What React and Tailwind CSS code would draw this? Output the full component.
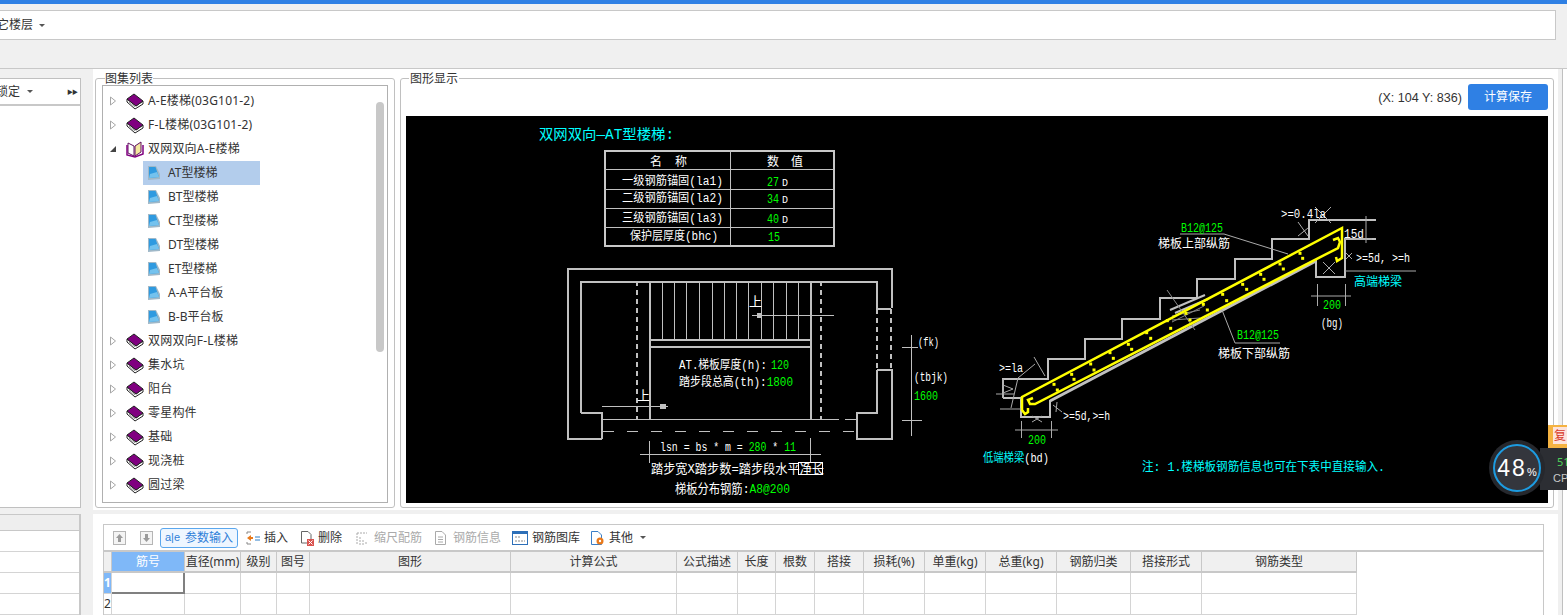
import React from "react";

// Arbol del panel central
const arbol = [
  { t: "A-E楼梯(03G101-2)", tipo: "libro" },
  { t: "F-L楼梯(03G101-2)", tipo: "libro" },
  { t: "双网双向A-E楼梯", tipo: "abierto" },
  { t: "AT型楼梯", tipo: "hoja", sel: true },
  { t: "BT型楼梯", tipo: "hoja" },
  { t: "CT型楼梯", tipo: "hoja" },
  { t: "DT型楼梯", tipo: "hoja" },
  { t: "ET型楼梯", tipo: "hoja" },
  { t: "A-A平台板", tipo: "hoja" },
  { t: "B-B平台板", tipo: "hoja" },
  { t: "双网双向F-L楼梯", tipo: "libro" },
  { t: "集水坑", tipo: "libro" },
  { t: "阳台", tipo: "libro" },
  { t: "零星构件", tipo: "libro" },
  { t: "基础", tipo: "libro" },
  { t: "现浇桩", tipo: "libro" },
  { t: "圆过梁", tipo: "libro" },
];

const columnas = [
  "",
  "筋号",
  "直径(mm)",
  "级别",
  "图号",
  "图形",
  "计算公式",
  "公式描述",
  "长度",
  "根数",
  "搭接",
  "损耗(%)",
  "单重(kg)",
  "总重(kg)",
  "钢筋归类",
  "搭接形式",
  "钢筋类型",
];

const Flecha = ({ abierto }) => (
  <svg width="8" height="10" viewBox="0 0 8 10" className="shrink-0">
    {abierto ? (
      <polygon points="7,2 7,8 1,8" fill="#444" />
    ) : (
      <polygon points="1.5,1 6.5,5 1.5,9" fill="#fff" stroke="#a6a6a6" />
    )}
  </svg>
);

const Libro = () => (
  <svg width="18" height="17" viewBox="0 0 18 17" className="shrink-0">
    <polygon points="1,6 1,9 9,16 17,11 17,8 10,13" fill="#fff" stroke="#222" />
    <polygon points="1,6 8,1 17,8 10,13" fill="#800080" stroke="#222" />
    <path d="M3 9 L9 14" stroke="#999" />
  </svg>
);

const LibroAbierto = () => (
  <svg width="18" height="17" viewBox="0 0 18 17" className="shrink-0">
    <path d="M2 2 L8 5 L8 15 L2 12 Z" fill="#fff" stroke="#601060" />
    <path d="M9 5 L15 1 L15 11 L9 15 Z" fill="#f4e9a0" stroke="#601060" />
    <path d="M1 4 L1 14 L9 16 L17 13 L17 4" fill="none" stroke="#800080" strokeWidth="1.5" />
  </svg>
);

const Hoja = () => (
  <svg width="14" height="16" viewBox="0 0 14 16" className="shrink-0">
    <polygon points="1,15 13,14 13,9 9,1 1,1" fill="#9fb8c8" />
    <polygon points="2,13 12,12 8.5,2 2,2" fill="#2f9ae0" />
    <polygon points="2,13 12,12 10,7 3,9" fill="#74c2ee" />
  </svg>
);

const NodoArbol = ({ nodo }) => (
  <div className="h-6 flex items-center text-xs text-[#333] whitespace-nowrap">
    {nodo.tipo === "hoja" ? (
      <div className={`ml-10 w-[117px] h-6 flex items-center pl-1 gap-[7px] ${nodo.sel ? "bg-[#b3cdec]" : ""}`}>
        <Hoja />
        <span>{nodo.t}</span>
      </div>
    ) : (
      <div className="ml-[6px] flex items-center">
        <Flecha abierto={nodo.tipo === "abierto"} />
        <div className="ml-[9px] mr-[4px]">{nodo.tipo === "abierto" ? <LibroAbierto /> : <Libro />}</div>
        <span className="tracking-[0.2px]">{nodo.t}</span>
      </div>
    )}
  </div>
);

const Leyenda = ({ children, className }) => (
  <span className={`absolute top-[-8px] bg-white text-xs leading-[15px] text-[#333] ${className}`}>{children}</span>
);

// Texto del dibujo CAD, w ajusta el ancho
const T = ({ x, y, c = "#fff", s = 12, w, children }) => (
  <text
    x={x}
    y={y}
    fill={c}
    fontSize={s}
    textLength={w}
    lengthAdjust="spacingAndGlyphs"
    fontFamily="'Liberation Mono','Noto Sans CJK SC',monospace"
  >
    {children}
  </text>
);

const G = ({ children }) => <tspan fill="#00ff00">{children}</tspan>;

const L = ({ d, w = 1, c = "#c0c0c0", da }) => (
  <path d={d} fill="none" stroke={c} strokeWidth={w} strokeDasharray={da} />
);

const puntos = [
  [540, 190], [548, 205], [480, 222], [490, 237], [422, 253], [432, 268], [368, 283], [380, 298],
  [308, 313], [320, 332], [250, 343], [262, 360], [198, 370], [210, 390], [142, 392], [152, 415],
  [80, 428], [92, 445], [25, 463], [35, 478],
].map(([x, y]) => [1120 + x / 3, 190 + y / 3]);

const puntosBajos = [
  [420, 98], [430, 115], [362, 132], [372, 150], [305, 163], [312, 178], [252, 193], [262, 210],
].map(([x, y]) => [970 + x / 3, 320 + y / 3]);

const peldanos = [662, 674, 686, 699, 712, 724, 736, 748, 761, 773, 786, 798];

const filasTabla = [
  ["一级钢筋锚固(la1)", 622, "27", 767, 186, "D"],
  ["二级钢筋锚固(la2)", 622, "34", 767, 203, "D"],
  ["三级钢筋锚固(la3)", 622, "40", 767, 223, "D"],
  ["保护层厚度(bhc)", 630, "15", 768, 241, ""],
];

const DibujoCad = () => (
  <svg viewBox="406 116 1142 387" className="block w-[1142px] h-[387px] bg-black">
    <T x={539} y={139} c="#00ffff" s={14} w={135}>双网双向—AT型楼梯:</T>

    {/* tabla */}
    <g shapeRendering="crispEdges">
      <rect x="604.5" y="150.5" width="229" height="95" fill="none" stroke="#c8c8c8" strokeWidth="2" />
      <L d="M730.5 150V246 M604 169.5H834 M604 189.5H834 M604 208.5H834 M604 227.5H834" />
    </g>
    <T x={650} y={166}>名</T>
    <T x={675} y={166}>称</T>
    <T x={767} y={166}>数</T>
    <T x={791} y={166}>值</T>
    {filasTabla.map(([nombre, x, val, vx, y, u]) => (
      <g key={nombre}>
        <T x={x} y={y - 1} w={x === 622 ? 101 : 88}>{nombre}</T>
        <T x={vx} y={y} c="#00ff00" w={12}>{val}</T>
        {u && <T x={782} y={y} s={11} w={6}>{u}</T>}
      </g>
    ))}

    {/* planta */}
    <g shapeRendering="crispEdges">
      <L w={2} d="M602 439H567.5V268.5H891.5V308 M581 413V281.5H876.5V309H891 M581 413H602V439 M877 370H891.5V439H857V413H877V370" />
      <L w={2} d="M636.5 281V419 M820.5 281V419 M877 309V370 M891 309V370" da="5 4" />
      <L w={2} d="M649.5 281V419 M810.5 281V419 M649 339.5H810 M649 346.5H810" />
      {peldanos.map((x) => (
        <L key={x} d={`M${x}.5 281V339`} />
      ))}
      <L d="M752 315.5H834 M602 406.5H668 M603 419.5H839 M845 419.5H857" />
      <L d="M603 431.5H857" da="11 13" />
      <L c="#c0c0c0" d="M911.5 335V436 M902 347.5H918 M902 420.5H922 M640 454.5H821 M649.5 441V463 M810.5 438V463" />
      <rect x="757" y="313" width="5" height="5" fill="#c0c0c0" />
      <rect x="660" y="404" width="6" height="5" fill="#c0c0c0" />
      <rect x="798.5" y="462.5" width="24" height="12" fill="none" stroke="#fff" />
    </g>
    <T x={749} y={306} s={13}>上</T>
    <T x={637} y={400} s={13}>上</T>
    <T x={679} y={369} w={88}>AT.梯板厚度(h):</T>
    <T x={771} y={369} c="#00ff00" w={18}>120</T>
    <T x={679} y={386} w={114}>踏步段总高(th):<G>1800</G></T>
    <T x={918} y={346} w={21}>(fk)</T>
    <T x={914} y={381} w={34}>(tbjk)</T>
    <T x={914} y={400} c="#00ff00" w={24}>1600</T>
    <T x={660} y={451} w={136}>lsn = bs * m = <G>280</G> * <G>11</G></T>
    <T x={651} y={473} s={13} w={173}>踏步宽X踏步数=踏步段水平净长</T>
    <T x={675} y={493} s={13} w={115}>梯板分布钢筋:<G>A8@200</G></T>

    {/* escalera */}
    <L w={2} d="M1003 398V379H1048V359H1085V339H1122V319H1160V298H1197V279H1235V259H1272V239H1309V220H1376" />
    <L w={2} d="M1376 239H1345V277H1316V260" />
    <L w={2} d="M1003 398H1021V417H1050V400" />
    <L w={3} d="M1050 401L1316 261" />
    <L w={2} d="M1170 310L1205 295 M1175 313L1208 299" />
    <L c="#888" d="M1167 290L1195 330 M1172 316L1200 310 M1172 320L1200 318 M1172 322L1204 306" />
    <L c="#ffff00" w={2.5} d="M1028 408V412L1025 414L1022 410V397L1342 228V258L1337 261L1336 257" />
    <L c="#ffff00" w={2.5} d="M1033 398L1028 400L1030 404H1035L1338 248L1340 242L1338 238L1333 240" />
    {[...puntos, ...puntosBajos].map(([x, y]) => (
      <rect key={`${x}-${y}`} x={x - 1.5} y={y - 1.5} width="3" height="3" fill="#ffff00" />
    ))}

    {/* cotas */}
    <L c="#aaa" d="M1180 234H1224L1288 254 M1235 343H1280 M1235 343L1222 310" />
    <L c="#aaa" d="M1315 207L1331 223 M1331 207L1315 223 M1298 222L1308 236 M1298 236L1308 228" />
    <L c="#aaa" d="M1345 271H1416 M1366 216V243 M1345 239H1372 M1311 296H1351 M1317.5 284V306 M1345.5 284V306 M1346 253L1352 259 M1346 259L1352 253 M1323 262L1335 274 M1323 274L1335 262" />
    <L c="#aaa" d="M1015 430H1058 M1021.5 421V438 M1051.5 421V438 M1003 379V398 M996 394H1014 M1000 409H1021 M1003 385L1013 389L1003 393 M1035 364L1018 378L1011 408 M1034 357L1045 376 M1053 405L1062 412 M1057 402L1056 412 M1032 416L1042 422 M1032 422L1042 416" />
    <T x={1181} y={232} c="#00ff00" w={42}>B12@125</T>
    <T x={1158} y={248} s={12.5} w={72}>梯板上部纵筋</T>
    <T x={1281} y={218} w={45}>&gt;=0.4la</T>
    <T x={1344} y={238} w={20}>15d</T>
    <T x={1356} y={262} w={54}>&gt;=5d, &gt;=h</T>
    <T x={1354} y={286} c="#00ffff" s={12.5} w={48}>高端梯梁</T>
    <T x={1323} y={309} c="#00ff00" w={18}>200</T>
    <T x={1321} y={327} w={22}>(bg)</T>
    <T x={1237} y={339} c="#00ff00" w={42}>B12@125</T>
    <T x={1218} y={358} s={12.5} w={72}>梯板下部纵筋</T>
    <T x={999} y={372} w={24}>&gt;=la</T>
    <T x={1063} y={420} w={47}>&gt;=5d,&gt;=h</T>
    <T x={1028} y={444} c="#00ff00" w={18}>200</T>
    <T x={983} y={462} c="#00ffff" w={66}>低端梯梁<tspan fill="#fff">(bd)</tspan></T>
    <T x={1142} y={471} c="#00ffff" w={243}>注: 1.楼梯板钢筋信息也可在下表中直接输入.</T>
  </svg>
);

// Iconos de la barra
const Ico = ({ w = 14, children }) => (
  <svg width={w} height="16" viewBox={`0 0 ${w} 16`} className="shrink-0">
    {children}
  </svg>
);

const Boton = ({ ancho, icono, children, gris }) => (
  <div className={`${ancho} h-5 flex items-center gap-[4px] whitespace-nowrap ${gris ? "text-[#aaa]" : "text-[#333]"}`}>
    {icono}
    <span>{children}</span>
  </div>
);

const BarraHerramientas = () => (
  <div className="h-[25px] flex items-center pl-[9px] text-xs">
    <div className="w-[27px] flex">
      <svg width="13" height="16" viewBox="0 0 13 16">
        <rect x=".5" y="1.5" width="12" height="13" fill="#f4f4f4" stroke="#b5b5b5" />
        <path d="M6.5 4L10 8H8V12H5V8H3Z" fill="#9a9a9a" />
      </svg>
    </div>
    <div className="w-[20px] flex">
      <svg width="13" height="16" viewBox="0 0 13 16">
        <rect x=".5" y="1.5" width="12" height="13" fill="#f4f4f4" stroke="#b5b5b5" />
        <path d="M6.5 12L10 8H8V4H5V8H3Z" fill="#9a9a9a" />
      </svg>
    </div>
    <div className="w-[78px] h-5 flex items-center gap-[5px] pl-1 rounded-[3px] border border-[#5aa7ee] bg-[#eef6ff] text-[#2f7fd8] whitespace-nowrap">
      <span className="text-[11px] leading-none font-['Liberation_Sans'] w-[15px]">a|e</span>
      <span>参数输入</span>
    </div>
    <div className="w-2" />
    <Boton
      ancho="w-[54px]"
      icono={
        <Ico>
          <path d="M1 2H5M1 14H5M1 2V4M1 12V14" stroke="#888" fill="none" />
          <path d="M1 8L5 5V7H7V9H5V11Z" fill="#e8791b" />
          <path d="M9 7H14M9 10H14" stroke="#2d7fc8" />
        </Ico>
      }
    >
      插入
    </Boton>
    <Boton
      ancho="w-[56px]"
      icono={
        <Ico>
          <path d="M1.5 1.5H8L11 4.500V13H1.5Z" fill="#fff" stroke="#666" />
          <rect x="7" y="9" width="7" height="7" fill="#d9534f" />
          <path d="M8.500 10.500L12.500 14.500M12.500 10.500L8.500 14.500" stroke="#fff" />
        </Ico>
      }
    >
      删除
    </Boton>
    <Boton
      ancho="w-[78px]"
      gris
      icono={
        <Ico>
          <path d="M1 3H11M1 3V15M4 7V15M7 10V15M10 12V15" stroke="#aaa" strokeDasharray="2 1" fill="none" />
        </Ico>
      }
    >
      缩尺配筋
    </Boton>
    <Boton
      ancho="w-[78px]"
      gris
      icono={
        <Ico w={15}>
          <path d="M1.5 1.500H8L11.500 5V14.500H1.500Z M4 7H9M4 9.500H9M4 12H9" fill="#fff" stroke="#aaa" />
        </Ico>
      }
    >
      钢筋信息
    </Boton>
    <Boton
      ancho="w-[78px]"
      icono={
        <Ico w={16}>
          <rect x=".5" y="1.500" width="15" height="13" fill="#fff" stroke="#2d6fb8" />
          <rect x="0" y="1" width="16" height="3" fill="#2d6fb8" />
          <path d="M3 7H9M3 11H13" stroke="#888" strokeDasharray="2 1" />
        </Ico>
      }
    >
      钢筋图库
    </Boton>
    <Boton
      ancho="w-[50px]"
      icono={
        <Ico w={15}>
          <path d="M1.500 1.500H8L11.500 5V14.500H1.500Z" fill="#fff" stroke="#3a7fc8" />
          <circle cx="10" cy="11" r="3.500" fill="#e8791b" />
          <circle cx="10" cy="11" r="1.200" fill="#fff" />
        </Ico>
      }
    >
      其他
    </Boton>
    <div className="w-0 h-0 border-x-[3px] border-x-transparent border-t-[3px] border-t-[#555]" />
  </div>
);

const TablaAcero = () => (
  <div className="grid w-[1253px] grid-cols-[8px_73px_56px_36px_33px_201px_166px_61px_38px_39px_49px_61px_61px_71px_74px_71px_155px] grid-rows-[21px_21px_21px] text-xs text-[#333] leading-none">
    {columnas.map((c, i) => (
      <div
        key={`h${i}`}
        className={`flex items-center justify-center whitespace-nowrap overflow-hidden border-r border-b-2 border-[#c8c8c8] ${
          i === 1 ? "bg-[#7fb8f8] text-white" : "bg-[#f0f0f0]"
        }`}
      >
        {c}
      </div>
    ))}
    {[1, 2].map((fila) =>
      columnas.map((c, i) => (
        <div
          key={`${fila}-${i}`}
          className={`flex items-center overflow-hidden ${
            i === 1 && fila === 1 ? "border-r-2 border-b-2 border-[#808080]" : "border-r border-b border-[#d4d4d4]"
          } ${i === 0 && fila === 1 ? "bg-[#7fb8f8] text-white font-bold" : ""}`}
        >
          {i === 0 ? fila : ""}
        </div>
      ))
    )}
  </div>
);

export default function App() {
  return (
    <div className="relative w-[1567px] h-[615px] overflow-hidden bg-[#f0f0f0] font-['Noto_Sans','Noto_Sans_CJK_SC',sans-serif]">
      <div className="h-1 bg-[#2f80e4]" />
      {/* barra de pisos */}
      <div className="mt-[6px] h-[30px] w-[1556px] bg-white border-y border-r border-[#c8c8c8] flex items-center text-xs text-[#333] whitespace-nowrap">
        <span className="ml-[-15px]">其它楼层</span>
        <div className="ml-[6px] w-0 h-0 border-x-[3px] border-x-transparent border-t-[3px] border-t-[#555]" />
      </div>
      <div className="h-[29px] border-b border-[#c8c8c8]" />

      <div className="flex h-[546px]">
        {/* columna izquierda */}
        <div className="w-[81px] shrink-0 pt-[9px]">
          <div className="h-[430px] bg-white border-t border-r border-b border-[#c0c0c0]">
            <div className="h-[27px] flex items-center justify-end pr-[3px] border-b-2 border-[#c8c8c8] text-xs text-[#333] whitespace-nowrap">
              <span>锁定</span>
              <div className="ml-[7px] mr-[34px] w-0 h-0 border-x-[3px] border-x-transparent border-t-[3px] border-t-[#555]" />
              <span className="text-[6px] tracking-[-1px] text-[#333]">▶▶</span>
            </div>
          </div>
          <div className="mt-[6px] bg-white border-r-2 border-[#c8c8c8]">
            <div className="h-[17px] bg-[#eeeeee] border-y border-[#c8c8c8]" />
            <div className="h-[21px] border-b border-[#d4d4d4]" />
            <div className="h-[21px] border-b border-[#d4d4d4]" />
            <div className="h-[21px] border-b border-[#d4d4d4]" />
            <div className="h-[21px] border-b border-[#d4d4d4]" />
          </div>
        </div>

        <div className="w-3 shrink-0" />

        {/* zona central */}
        <div className="w-[1465px] shrink-0 flex flex-col">
          <div className="h-[441px] bg-white pt-[9px] pl-[2px] flex gap-[5px]">
            <div className="relative w-[300px] h-[430px] border border-[#c0c0c0] rounded-[3px] pt-[6px] pl-[6px]">
              <Leyenda className="left-[9px]">图集列表</Leyenda>
              <div className="relative w-[286px] h-[418px] border border-[#b0b0b0] pt-[3px] overflow-hidden">
                {arbol.map((nodo) => (
                  <NodoArbol key={nodo.t} nodo={nodo} />
                ))}
                <div className="absolute left-[273px] top-4 w-2 h-[250px] rounded bg-[#c8c8c8]" />
              </div>
            </div>

            <div className="relative w-[1154px] h-[430px] border border-[#c0c0c0] rounded-[3px] pl-[5px]">
              <Leyenda className="left-2 px-[1px]">图形显示</Leyenda>
              <div className="h-[37px] pt-[5px] flex items-start justify-end gap-[6px] pr-[5px]">
                <span className="mt-[6px] text-[12.6px] leading-[16px] text-[#333] font-['Liberation_Sans']">(X: 104 Y: 836)</span>
                <div className="w-20 h-[26px] rounded-[3px] bg-[#2f80e4] text-white text-xs flex items-center justify-center">计算保存</div>
              </div>
              <DibujoCad />
            </div>
          </div>

          <div className="h-1 shrink-0" />

          <div className="h-[101px] bg-white pt-[10px] pl-[10px] pr-[14px]">
            <div className="border-t border-x border-[#c8c8c8] h-[91px]">
              <BarraHerramientas />
              <div className="border-t-2 border-[#c8c8c8]">
                <TablaAcero />
              </div>
            </div>
          </div>
        </div>

        <div className="w-[5px] shrink-0 border-r border-[#c0c0c0]" />
        <div className="flex-1 bg-white" />
      </div>

      {/* monitor flotante */}
      <div className="absolute left-[1548px] top-[425px] w-[19px] h-[23px] bg-[#f5b342] overflow-hidden">
        <span className="absolute left-[5px] top-[2px] w-[14px] h-[17px] bg-[#fde3dc] text-[#d83a2a] text-xs leading-[17px] pl-[1px]">复</span>
      </div>
      <div className="absolute left-[1540px] top-[448px] w-[27px] h-[42px] bg-[#2c2e33] pl-[17px] text-[11px] whitespace-nowrap overflow-hidden">
        <div className="text-[#4fd05a] leading-[18px] mt-[5px]">51</div>
        <div className="text-[#c8c8c8] leading-[14px] ml-[-4px] font-['Liberation_Sans']">CP</div>
      </div>
      <div className="absolute left-[1489px] top-[440px] w-[56px] h-[56px] rounded-full bg-[#26282d] flex items-center justify-center">
        <div className="w-[48px] h-[48px] rounded-full border-2 border-[#1d9be0] bg-[#34363d] flex items-baseline justify-center text-white font-['Liberation_Sans'] leading-[44px]">
          <span className="text-[23px] tracking-[2px]">48</span>
          <span className="text-[11px]">%</span>
        </div>
      </div>
    </div>
  );
}
